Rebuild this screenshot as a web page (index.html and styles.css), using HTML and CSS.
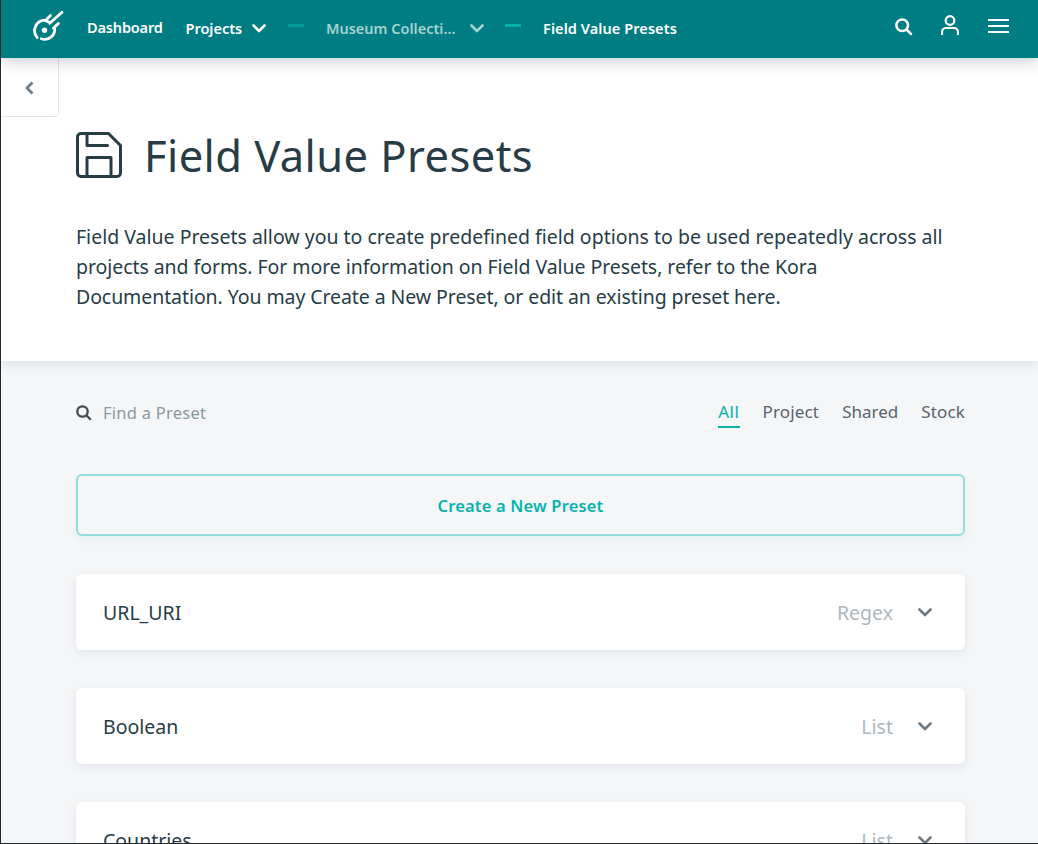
FILE: index.html
```html
<!DOCTYPE html>
<html lang="en">
<head>
<meta charset="utf-8">
<title>Field Value Presets</title>
<link rel="stylesheet" href="styles.css">
</head>
<body>
<div class="app">
  <header class="navbar">
    <svg class="logo" viewBox="0 0 34 34"><path d="M7.200 27.600A10.500 10.500 0 0 1 15 10.200l5.200 2.600M16.500 9.500l4-4M19.700 13.200L32 2.200M28.500 13.400l-5 4.600M24.500 17.300A10 10 0 0 1 11.300 28.700"/><circle cx="14.500" cy="20.300" r="2.700"/></svg>
    <nav class="trail">
      <a class="crumb crumb-home">Dashboard</a>
      <a class="crumb crumb-projects">Projects</a>
      <svg class="chev chev-nav" viewBox="0 0 14 9"><path d="M1.500 1.500L7 7l5.500-5.500"/></svg>
      <span class="dash"></span>
      <a class="crumb crumb-museum">Museum Collecti...</a>
      <svg class="chev chev-museum" viewBox="0 0 14 9"><path d="M1.500 1.500L7 7l5.500-5.500"/></svg>
      <span class="dash dash-bright"></span>
      <a class="crumb crumb-current">Field Value Presets</a>
    </nav>
    <div class="tools">
      <svg class="tool-search" viewBox="0 0 18 18"><circle cx="7.200" cy="7.200" r="5.800"/><path d="M11.500 11.500l4.500 4.500"/></svg>
      <svg class="tool-user" viewBox="0 0 18 21"><circle cx="9" cy="5.500" r="4.300"/><path d="M1 20v-3a4 4 0 0 1 4-4h8a4 4 0 0 1 4 4v3"/></svg>
      <svg class="tool-menu" viewBox="0 0 20 14"><path d="M0 1h20M0 7h20M0 13h20"/></svg>
    </div>
  </header>
  <section class="hero">
    <button class="drawer"><svg class="back" viewBox="0 0 9 14"><path d="M7.500 1.500L2 7l5.500 5.500"/></svg></button>
    <div class="heading">
      <svg class="floppy" viewBox="0 0 46 46"><path d="M5 1.500h27.500l12 12V41a3.500 3.500 0 0 1-3.500 3.500H5A3.500 3.500 0 0 1 1.500 41V5A3.500 3.500 0 0 1 5 1.500zM11 2v11.500h20.500M11 44V25.500h24V44"/></svg>
      <h1 class="title">Field Value Presets</h1>
    </div>
    <p class="intro"><span class="line line-a">Field Value Presets allow you to create predefined field options to be used repeatedly across all</span> <span class="line line-b">projects and forms. For more information on Field Value Presets, refer to the Kora</span> <span class="line line-c">Documentation. You may Create a New Preset, or edit an existing preset here.</span></p>
  </section>
  <main class="content">
    <div class="filters">
      <label class="search"><svg class="find" viewBox="0 0 16 16"><circle cx="6.500" cy="6.500" r="5.200"/><path d="M10.300 10.300l4.500 4.500"/></svg><span class="hint">Find a Preset</span></label>
      <div class="tabs"><a class="tab tab-active">All</a><a class="tab tab-project">Project</a><a class="tab tab-shared">Shared</a><a class="tab tab-stock">Stock</a></div>
    </div>
    <button class="create">Create a New Preset</button>
    <div class="card"><span class="name">URL_URI</span><span class="kind">Regex</span><svg class="chev chev-card" viewBox="0 0 14 9"><path d="M1.500 1.500L7 7l5.500-5.500"/></svg></div>
    <div class="card"><span class="name">Boolean</span><span class="kind">List</span><svg class="chev chev-card" viewBox="0 0 14 9"><path d="M1.500 1.500L7 7l5.500-5.500"/></svg></div>
    <div class="card"><span class="name">Countries</span><span class="kind">List</span><svg class="chev chev-card" viewBox="0 0 14 9"><path d="M1.500 1.500L7 7l5.500-5.500"/></svg></div>
  </main>
</div>
</body>
</html>
```
FILE: styles.css
```css
* { box-sizing: border-box; }
body { margin: 0; font-family: "Noto Sans", "Open Sans", sans-serif; color: #283c46; }
button { font: inherit; padding: 0; }
svg { display: block; flex: none; fill: none; stroke: currentColor; stroke-linecap: round; stroke-linejoin: round; }
.app { height: 844px; overflow: hidden; border-left: 1px solid #26282c; border-bottom: 1px solid #26282c; background: #f4f6f8; }

.navbar { position: relative; z-index: 2; display: flex; height: 58px; background: #007d82; color: #fff; box-shadow: 0 3px 14px rgba(40, 50, 60, .25); }
.logo { width: 34px; height: 34px; margin: 10px 0 0 29px; stroke-width: 2.800; }
.logo circle { fill: currentColor; stroke: none; }
.trail { display: flex; height: 56px; align-items: center; margin-left: 23px; }
.crumb { flex: none; font-size: 14.500px; font-weight: 600; line-height: 20px; white-space: nowrap; }
.crumb-home { width: 98.500px; margin-top: -2px; letter-spacing: -.15px; }
.crumb-projects { width: 66.500px; }
.chev { width: 14px; height: 9px; stroke-width: 2.600; }
.dash { width: 16px; height: 3px; margin: -5px 22px 0; border-radius: 1px; background: #059b9b; }
.dash-bright { margin: -5px 22px 0 21px; background: #06afab; }
.crumb-museum { width: 144px; color: #a6d1d2; }
.chev-museum { color: #a6d1d2; }
.crumb-current { letter-spacing: .08px; }
.tools { display: flex; align-items: flex-start; margin: 0 29px 0 auto; }
.tool-search { width: 18px; height: 18px; margin: 18px 28px 0 0; stroke-width: 2.500; }
.tool-user { width: 18px; height: 21px; margin: 15px 29px 0 0; stroke-width: 2.200; stroke-linecap: butt; }
.tool-menu { width: 21px; height: 14px; margin-top: 19px; stroke-width: 2; }

.hero { position: relative; z-index: 1; height: 303px; background: #fff; box-shadow: 0 2px 12px rgba(40, 50, 60, .12); }
.drawer { display: flex; align-items: center; justify-content: center; width: 58px; height: 59px; border: 1px solid #e4e6e7; border-width: 0 1px 1px 0; border-radius: 0 0 5px 0; background: #fff; color: #717d86; }
.back { width: 9px; height: 14px; margin-top: 2px; stroke-width: 2.800; stroke-linecap: butt; stroke-linejoin: miter; }
.heading { display: flex; align-items: center; height: 60px; margin: 9px 0 0 75px; }
.floppy { width: 46px; height: 46px; margin-top: -2px; stroke-width: 3; }
.title { margin: -2px 0 0 22px; font-size: 43.500px; font-weight: 400; line-height: 60px; letter-spacing: .42px; white-space: nowrap; }
.intro { margin: 36px 0 0 75px; font-size: 19.500px; line-height: 30px; }
.line { display: block; white-space: nowrap; }
.line-b { letter-spacing: -.063px; }
.line-c { letter-spacing: -.08px; }

.content { padding: 37px 73px 0 75px; }
.filters { display: flex; height: 76px; justify-content: space-between; }
.search { display: flex; height: 30px; align-items: center; color: #454a4e; }
.find { width: 16px; height: 16px; stroke-width: 2.300; stroke-linecap: butt; }
.hint { margin: -2px 0 0 11px; font-size: 16.500px; letter-spacing: .25px; color: #8b989e; }
.tabs { display: flex; gap: 23px; align-items: flex-start; }
.tab { padding-top: 2px; height: 30px; font-size: 17px; line-height: 24px; color: #57646c; white-space: nowrap; }
.tab-active { letter-spacing: .6px; color: #06b3ae; border-bottom: 2px solid #06b3ae; }
.tab-project { letter-spacing: .15px; }
.tab-stock { letter-spacing: .15px; }
.create { display: block; width: 100%; height: 62px; border: 2px solid #93deda; border-radius: 6px; background: transparent; color: #06b3ae; font-size: 16.500px; font-weight: 600; letter-spacing: .17px; box-shadow: 0 4px 8px rgba(6, 179, 130, .06); }
.card { display: flex; height: 76px; margin-top: 38px; padding: 0 33px 0 27px; align-items: center; border-radius: 6px; background: #fff; box-shadow: 0 3px 10px rgba(40, 50, 60, .08); }
.name { flex: 1; font-size: 19.500px; white-space: nowrap; }
.kind { font-size: 19.500px; color: #b0b8be; white-space: nowrap; }
.chev-card { margin-left: 25px; color: #6e7a83; }
```
